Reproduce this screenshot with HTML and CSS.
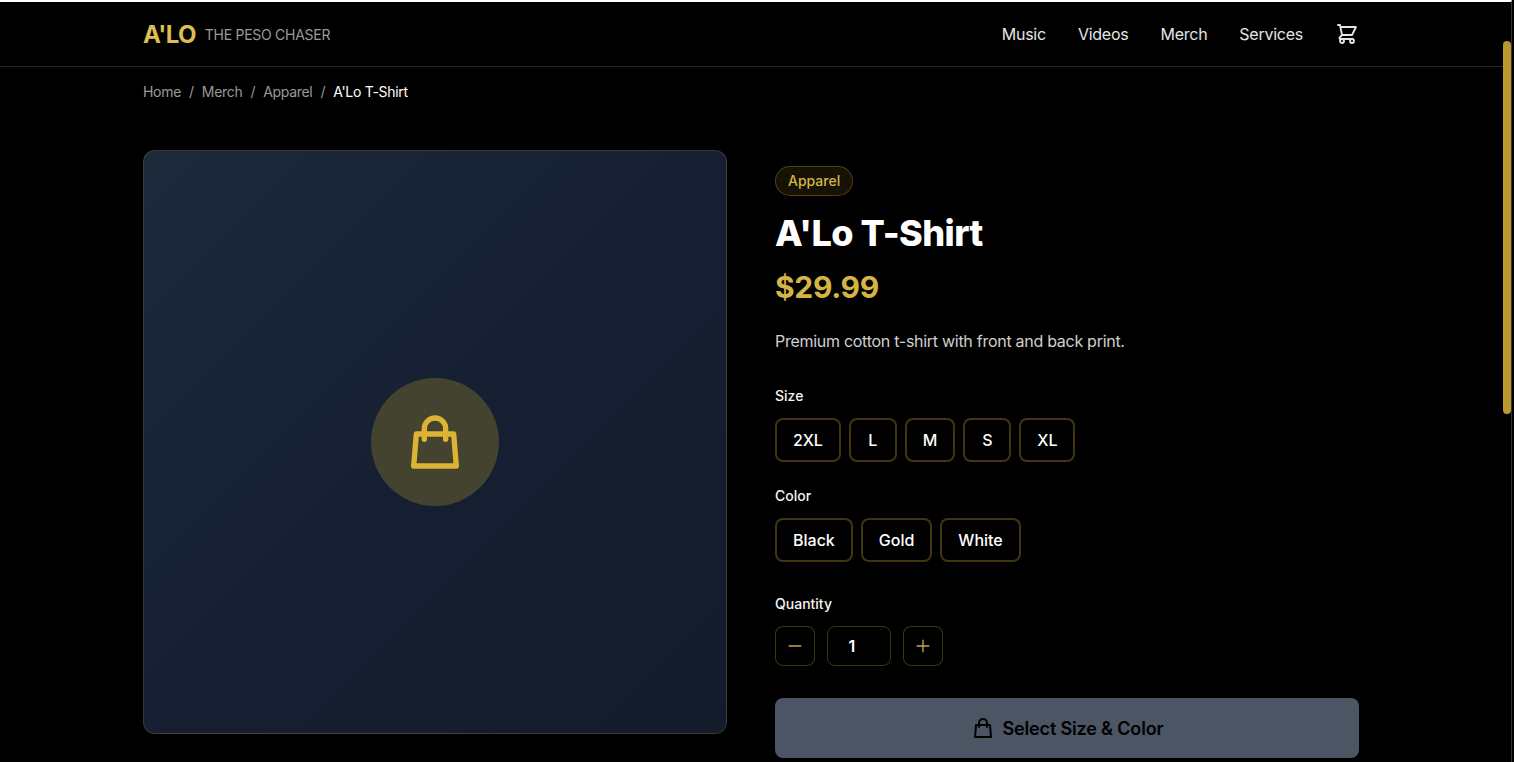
FILE: index.html
```html
<!DOCTYPE html>
<html lang="en">
<head>
<meta charset="utf-8">
<title>A'Lo T-Shirt</title>
<link rel="stylesheet" href="styles.css">
</head>
<body>
<div class="window">
  <div class="content">
    <header class="header">
      <div class="container header-row">
        <a class="brand" href="#"><span class="logo">A'LO</span><span class="tagline">THE PESO CHASER</span></a>
        <nav class="nav">
          <a href="#">Music</a>
          <a href="#">Videos</a>
          <a href="#">Merch</a>
          <a href="#">Services</a>
          <svg class="cart" viewBox="0 0 24 24" fill="none" stroke="currentColor" stroke-width="1.8" stroke-linecap="round" stroke-linejoin="round"><path d="M3 3h2l.4 2M7 13h10l4-8H5.4M7 13L5.4 5M7 13l-2.293 2.293c-.63.63-.184 1.707.707 1.707H17m0 0a2 2 0 100 4 2 2 0 000-4zm-8 2a2 2 0 11-4 0 2 2 0 014 0z"/></svg>
        </nav>
      </div>
    </header>
    <main class="container">
      <nav class="crumbs">
        <a href="#">Home</a><span class="sep">/</span><a href="#">Merch</a><span class="sep">/</span><a href="#">Apparel</a><span class="sep">/</span><span class="current">A'Lo T-Shirt</span>
      </nav>
      <div class="product">
        <div class="visual">
          <div class="visual-badge">
            <svg class="visual-icon" viewBox="0 0 24 24" fill="none" stroke="currentColor" stroke-width="2" stroke-linecap="round" stroke-linejoin="round"><path d="M16 11V7a4 4 0 00-8 0v4M5 9h14l1 12H4L5 9z"/></svg>
          </div>
        </div>
        <div class="details">
          <span class="tag">Apparel</span>
          <h1 class="title">A'Lo T-Shirt</h1>
          <p class="price">$29.99</p>
          <p class="desc">Premium cotton t-shirt with front and back print.</p>
          <div class="label">Size</div>
          <div class="options options-size">
            <button class="opt">2XL</button><button class="opt">L</button><button class="opt">M</button><button class="opt">S</button><button class="opt">XL</button>
          </div>
          <div class="label label-color">Color</div>
          <div class="options">
            <button class="opt">Black</button><button class="opt">Gold</button><button class="opt">White</button>
          </div>
          <div class="label label-qty">Quantity</div>
          <div class="qty">
            <button class="step"><svg viewBox="0 0 24 24" fill="none" stroke="currentColor" stroke-width="1.6" stroke-linecap="round"><path d="M5 12h14"/></svg></button>
            <div class="qty-value">1</div>
            <button class="step"><svg viewBox="0 0 24 24" fill="none" stroke="currentColor" stroke-width="1.6" stroke-linecap="round"><path d="M12 5v14M5 12h14"/></svg></button>
          </div>
          <button class="buy">
            <svg viewBox="0 0 24 24" fill="none" stroke="currentColor" stroke-width="2" stroke-linecap="round" stroke-linejoin="round"><path d="M16 11V7a4 4 0 00-8 0v4M5 9h14l1 12H4L5 9z"/></svg>
            Select Size &amp; Color
          </button>
        </div>
      </div>
    </main>
  </div>
  <div class="rail"><div class="thumb"></div></div>
</div>
</body>
</html>
```
FILE: styles.css
```css
* { box-sizing: border-box; }
html, body { margin: 0; height: 100%; background: #000; overflow: hidden; }
body { font-family: Inter, "Liberation Sans", sans-serif; color: #fff; }
a { color: inherit; text-decoration: none; }
button { font-family: inherit; cursor: pointer; }

.window {
  width: 1512px;
  height: 762px;
  display: flex;
  border-top: 2px solid #fff;
  border-right: 1px solid #333;
  overflow: hidden;
}
.content { width: 1503px; flex: none; }
.rail { width: 8px; flex: none; padding-top: 39px; }
.thumb { height: 373px; background: #b9982f; border-radius: 4px; }

.container { width: 1216px; margin-left: 143px; }

.header { height: 65px; border-bottom: 1px solid #262626; }
.header-row { height: 64px; display: flex; align-items: center; justify-content: space-between; }
.brand { display: flex; align-items: center; gap: 9px; padding-top: 1px; }
.logo { font-size: 24px; line-height: 32px; font-weight: 700; color: #dfbd52; letter-spacing: -0.7px; }
.tagline { font-size: 14px; line-height: 20px; color: #9a9a9a; letter-spacing: -0.27px; }
.nav { display: flex; align-items: center; gap: 32px; font-size: 16px; font-weight: 400; color: #e5e5e5; letter-spacing: -0.25px; }
.cart { width: 24px; height: 24px; color: #e5e5e5; }

.crumbs { display: flex; align-items: center; padding-top: 15px; font-size: 14px; line-height: 20px; color: #9a9a9a; letter-spacing: -0.3px; }
.sep { margin: 0 8px; }
.current { color: #fff; }

.product { display: grid; grid-template-columns: 584px 584px; gap: 48px; margin-top: 48px; }

.visual {
  height: 584px;
  display: flex;
  align-items: center;
  justify-content: center;
  border: 1px solid rgba(212, 175, 55, 0.2);
  border-radius: 12px;
  background: linear-gradient(135deg, #1c2a3b 0%, #161f32 52%, #141b2b 100%);
}
.visual-badge {
  width: 128px;
  height: 128px;
  border-radius: 50%;
  display: flex;
  align-items: center;
  justify-content: center;
  background: #44432f;
}
.visual-icon { width: 64px; height: 64px; color: #dcb334; }

.details { padding-top: 16px; }
.tag {
  display: block;
  width: fit-content;
  height: 30px;
  padding: 0 12px;
  border: 1px solid rgba(212, 175, 55, 0.3);
  border-radius: 15px;
  background: rgba(212, 175, 55, 0.1);
  color: #d4b544;
  font-size: 14px;
  line-height: 28px;
  font-weight: 500;
}
.title { margin: 17px 0 0; font-size: 36px; line-height: 40px; font-weight: 800; letter-spacing: -0.55px; }
.price { margin: 16px 0 0; font-size: 30px; line-height: 36px; font-weight: 700; color: #d4b544; letter-spacing: -0.3px; }
.desc { margin: 24px 0 0; font-size: 16px; line-height: 24px; color: #d0d0d0; letter-spacing: -0.28px; }
.label { margin-top: 33px; font-size: 14px; line-height: 20px; font-weight: 500; color: #f3f3f3; }
.label-color { margin-top: 24px; }
.label-qty { margin-top: 32px; }
.options { display: flex; gap: 8px; margin-top: 12px; }
.opt {
  height: 44px;
  min-width: 48px;
  padding: 0 16px;
  background: #000;
  border: 2px solid rgba(212, 175, 55, 0.3);
  border-radius: 8px;
  color: #fff;
  font-size: 16px;
  font-weight: 500;
}
.options-size .opt { letter-spacing: -0.1px; }
.qty { display: flex; gap: 12px; margin-top: 12px; }
.step {
  width: 40px;
  height: 40px;
  padding: 0;
  display: flex;
  align-items: center;
  justify-content: center;
  background: #000;
  border: 1px solid rgba(212, 175, 55, 0.3);
  border-radius: 8px;
  color: #c9a45c;
}
.step svg { width: 20px; height: 20px; }
.qty-value {
  width: 64px;
  height: 40px;
  padding-right: 14px;
  border: 1px solid rgba(212, 175, 55, 0.3);
  border-radius: 8px;
  text-align: center;
  font-size: 16px;
  line-height: 38px;
  font-weight: 600;
}
.buy {
  width: 100%;
  height: 60px;
  margin-top: 32px;
  display: flex;
  align-items: center;
  justify-content: center;
  gap: 8px;
  background: #4b5563;
  border: 0;
  border-radius: 8px;
  color: #000;
  font-size: 18px;
  font-weight: 600;
  letter-spacing: -0.16px;
}
.buy svg { width: 24px; height: 24px; }
```
